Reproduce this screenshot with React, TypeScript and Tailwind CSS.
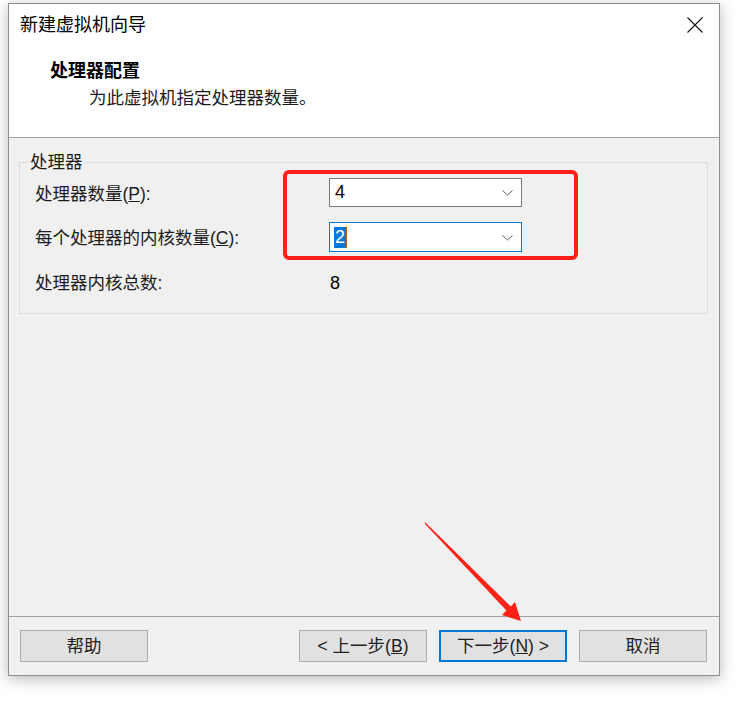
import React from "react";

const Combo = ({ value, active }: { value: string; active?: boolean }) => {
    return (
        <div
            className={`flex items-center justify-between bg-white pl-[4px] pr-[8px] w-[193px] ${
                active ? "h-[30px] border border-[#0078d7]" : "h-[29px] border border-[#7a7a7a]"
            }`}
        >
            {active ? (
                <span className="flex items-center">
                    <span className="bg-[#0078d7] text-white text-[18px] leading-[21px] px-[1px]">{value}</span>
                    <span className="w-px h-[21px] bg-[#b85a10]" />
                </span>
            ) : (
                <span className="text-[18px] leading-[21px] text-black pl-[1px]">{value}</span>
            )}
            <svg width="11" height="6" viewBox="0 0 11 6" className="mt-[1px]">
                <path d="M0.5 0.5 L5.5 5 L10.5 0.5" fill="none" stroke="#5a5a5a" strokeWidth="1" />
            </svg>
        </div>
    );
};

const Btn = ({ children, primary }: { children: React.ReactNode; primary?: boolean }) => {
    return (
        <button
            className={`w-[128px] h-[32px] flex items-center justify-center text-[17.5px] text-[#222] bg-[#e1e1e1] ${
                primary ? "border-2 border-[#0078d7]" : "border border-[#adadad]"
            }`}
        >
            {children}
        </button>
    );
};

export default function App() {
    return (
        <div className="relative w-[738px] h-[708px] bg-white pt-[3px] pl-[8px] font-['Liberation_Sans','Noto_Sans_CJK_SC',sans-serif] text-[#1c1c1c]">
            <div className="w-[712px] h-[673px] border border-[#8e8e8e] bg-white flex flex-col shadow-[0_3px_14px_rgba(0,0,0,0.28)]">
                {/* title bar */}
                <div className="h-[42px] flex items-center justify-between pl-[11px] pr-[16px]">
                    <span className="text-[18px] leading-[24px] text-black">新建虚拟机向导</span>
                    <svg width="16" height="16" viewBox="0 0 16 16">
                        <path d="M0.5 0.5 L15.5 15.5 M15.5 0.5 L0.5 15.5" stroke="#111" strokeWidth="1.1" />
                    </svg>
                </div>

                {/* header */}
                <div className="h-[92px] border-b border-[#a0a0a0] pt-[13px]">
                    <p className="pl-[41px] text-[18px] leading-[24px] font-bold text-black">处理器配置</p>
                    <p className="pl-[80px] mt-[3px] text-[17.5px] leading-[24px]">为此虚拟机指定处理器数量。</p>
                </div>

                {/* body */}
                <div className="flex-1 bg-[#f0f0f0] pl-[10px] pr-[11px]">
                    <fieldset className="mt-[13px] border border-[#dcdcdc] pl-[15px] pt-[5px] pb-[15px]">
                        <legend className="ml-[-7px] px-[2px] text-[17.5px] leading-[22px]">处理器</legend>
                        <div className="grid grid-cols-[294px_193px] items-center">
                            <span className="text-[17.5px] leading-[24px] mt-[2px]">
                                处理器数量(<span className="underline">P</span>):
                            </span>
                            <Combo value="4" />
                            <span className="text-[17.5px] leading-[24px] mt-[16px]">
                                每个处理器的内核数量(<span className="underline">C</span>):
                            </span>
                            <div className="mt-[15px]">
                                <Combo value="2" active />
                            </div>
                            <span className="h-[30px] mt-[16px] flex items-center text-[17.5px]">处理器内核总数:</span>
                            <span className="h-[30px] mt-[16px] flex items-center text-[18px] pl-[1px] text-black">8</span>
                        </div>
                    </fieldset>
                </div>

                {/* footer */}
                <div className="h-[59px] border-t border-[#a0a0a0] bg-[#f0f0f0] pt-[13px] pl-[11px] pr-[12px] flex justify-between">
                    <Btn>帮助</Btn>
                    <div className="flex gap-[12px]">
                        <Btn>
                            &lt; 上一步(<span className="underline">B</span>)
                        </Btn>
                        <Btn primary>
                            下一步(<span className="underline">N</span>) &gt;
                        </Btn>
                        <Btn>取消</Btn>
                    </div>
                </div>
            </div>

            {/* annotations */}
            <svg className="absolute inset-0 pointer-events-none" width="738" height="708" viewBox="0 0 738 708">
                <rect x="285" y="172" width="291" height="86" rx="4" fill="none" stroke="#fe2117" strokeWidth="4" />
                <polygon
                    points="425.4,522.6 510.6,606.4 515,602 521,621 502,615 506.4,610.6 424.6,523.4"
                    fill="#fe2117"
                />
            </svg>
        </div>
    );
}
